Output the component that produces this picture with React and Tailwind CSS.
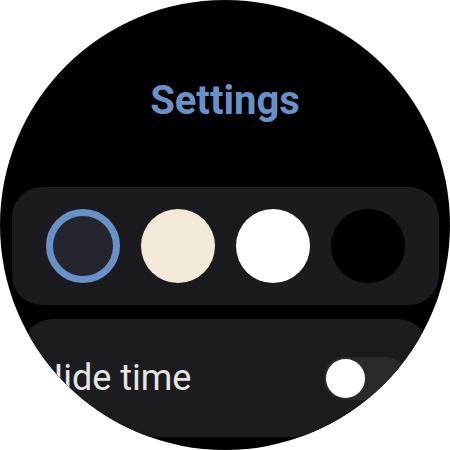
const swatches = [
  { key: "slate", className: "border-[7px] border-[#6891c8] bg-[#25252d]" },
  { key: "cream", className: "bg-[#f3e9d9]" },
  { key: "white", className: "bg-white" },
  { key: "black", className: "bg-black" },
];

const App = () => {
  return (
    <div className="h-[450px] w-[450px] bg-white font-['Roboto',sans-serif]">
      <div className="flex h-[450px] w-[450px] flex-col items-center overflow-hidden rounded-full bg-black">
        <h1 className="pt-[79px] text-[40px] font-bold leading-[44px] text-[#6891c8]">
          Settings
        </h1>

        {/* colour picker */}
        <div className="mt-[64px] flex h-[118px] w-[427px] shrink-0 items-center justify-center gap-[21px] rounded-[30px] bg-[#1b1b1f]">
          {swatches.map((s) => (
            <div
              key={s.key}
              className={`h-[74px] w-[74px] rounded-full ${s.className}`}
            />
          ))}
        </div>

        {/* hide time toggle */}
        <div className="mt-[14px] flex h-[118px] w-[405px] shrink-0 items-center justify-between rounded-[30px] bg-[#1c1c20] pl-[15px] pr-[22px]">
          <span className="text-[36px] leading-none text-[#e6e6e6]">
            Hide time
          </span>
          <div className="flex h-[43px] w-[82px] items-center rounded-full bg-[#2a2a2c] px-[2px]">
            <div className="h-[39px] w-[39px] rounded-full bg-white" />
          </div>
        </div>
      </div>
    </div>
  );
};

export default App;
